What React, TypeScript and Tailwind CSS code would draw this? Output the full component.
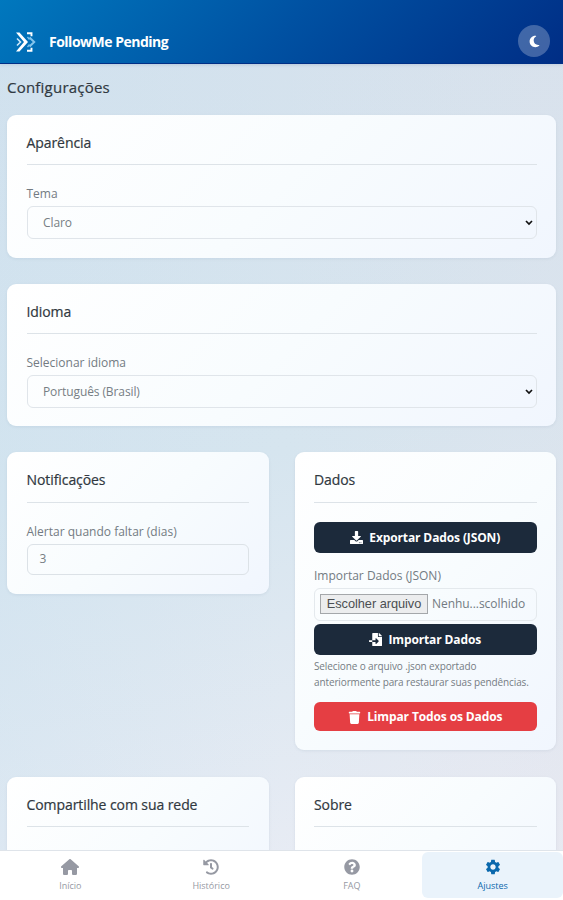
import type { ReactNode } from 'react';
import { FaDownload, FaFileImport, FaHistory, FaQuestionCircle, FaTrash } from 'react-icons/fa';
import { FaHouse, FaMoon } from 'react-icons/fa6';
import { MdSettings } from 'react-icons/md';
import { clsx } from 'clsx';

const tabs = [
  { label: 'Início', icon: FaHouse, size: 'h-4 w-[18px]' },
  { label: 'Histórico', icon: FaHistory, size: 'h-4 w-4' },
  { label: 'FAQ', icon: FaQuestionCircle, size: 'h-4 w-4' },
  { label: 'Ajustes', icon: MdSettings, size: '-m-px h-[18px] w-[18px]', active: true },
];

function Logo() {
  return (
    <svg viewBox="0 0 20 20" className="h-5 w-5" fill="none">
      <path d="M0 0.5h3.5L12 10l-8.500 9.500H0L8 10z" fill="#fff" />
      <path d="M1 6.500L4.500 10L1 13.500" stroke="#c9e6fa" strokeWidth="1.600" />
      <path d="M13.500 5.500l4.700 4.500-4.700 4.500" stroke="#83c4ec" strokeWidth="2" />
      <path d="M11 1.300h4.500v3M11 18.700h4.500v-3" stroke="#fff" strokeWidth="1.900" />
      <path d="M11.500 5l2 2.500M11.500 15l2-2.500" stroke="#7cc0ea" strokeWidth="1.300" />
    </svg>
  );
}

function Card({ title, className, children }: { title: string; className?: string; children?: ReactNode }) {
  return (
    <section
      className={clsx(
        'rounded-[9px] bg-linear-[135deg] from-white via-[#f8fcfe] to-[#f1f6fe] px-[19.5px] pt-[18px] shadow-[0_1px_3px_rgba(80,110,140,0.1)]',
        className
      )}
    >
      <h2 className="h-[32.5px] border-b border-[#dde3e8] text-[14px] leading-[19px] font-medium tracking-[-0.08px] text-[#303840] [-webkit-text-stroke:0.2px]">
        {title}
      </h2>
      {children}
    </section>
  );
}

function Label({ children }: { children: ReactNode }) {
  return <p className="text-[12px] leading-4 whitespace-nowrap text-[#737b82]">{children}</p>;
}

function Select({ value }: { value: string }) {
  return (
    <div className="mt-1 flex h-[33px] items-center justify-between rounded-[6px] border border-[#e0e5ea] pr-[3px] pl-[15.5px] text-[12px] tracking-[-0.1px] text-[#777e84]">
      <span>{value}</span>
      <svg viewBox="0 0 8 6" className="h-[6px] w-2" fill="none" stroke="#111" strokeWidth="1.7">
        <path d="M1 1l3 3 3-3" />
      </svg>
    </div>
  );
}

function Button({ icon, danger, className, children }: { icon: ReactNode; danger?: boolean; className?: string; children: ReactNode }) {
  return (
    <button
      className={clsx(
        'flex w-full items-center justify-center gap-[6px] rounded-[6px] text-[12px] font-bold tracking-[-0.12px] whitespace-nowrap text-white',
        danger ? 'bg-[#e53e43]' : 'bg-[#1c2a3b]',
        className
      )}
    >
      {icon}
      <span>{children}</span>
    </button>
  );
}

export default function App() {
  return (
    <div className="flex h-[900px] w-full flex-col overflow-hidden bg-linear-[170deg] from-[#d4e1ed] via-[#d6e5ef] via-50% to-[#ebedf5] font-['Open_Sans','Noto_Sans',sans-serif]">
      <header className="flex h-16 shrink-0 items-end justify-between bg-linear-[135deg] from-[#0078be] via-[#0051a2] to-[#002d85] pr-[13px] pl-4 shadow-[inset_0_-1px_0_#002f86,0_1px_3px_rgba(60,90,130,0.2)]">
        <div className="flex h-[45px] items-center gap-[13px]">
          <Logo />
          <h1 className="text-[14px] font-bold tracking-[-0.5px] text-white">FollowMe Pending</h1>
        </div>
        <button className="mb-[7px] flex h-8 w-8 items-center justify-center rounded-full bg-white/25 text-white">
          <FaMoon className="h-[13px] w-[13px]" />
        </button>
      </header>

      <main className="min-h-0 flex-1 overflow-hidden bg-linear-to-r from-[#c9e1f0]/30 via-transparent to-[#e3e1ea]/30 px-[7px]">
        <h1 className="flex h-[50.5px] items-center pb-[5px] text-[15px] font-medium tracking-[0.22px] text-[#303941] [-webkit-text-stroke:0.2px]">
          Configurações
        </h1>

        <Card title="Aparência" className="mb-[26px] h-[143px]">
          <div className="pt-[21px]">
            <Label>Tema</Label>
            <Select value="Claro" />
          </div>
        </Card>

        <Card title="Idioma" className="mb-[26px] h-[142.5px]">
          <div className="pt-[21px]">
            <Label>Selecionar idioma</Label>
            <Select value="Português (Brasil)" />
          </div>
        </Card>

        <div className="grid grid-cols-2 items-start gap-[26px]">
          <Card title="Notificações" className="h-[142px]">
            <div className="pt-[21px]">
              <Label>Alertar quando faltar (dias)</Label>
              <div className="mt-1 flex h-[31px] items-center rounded-[6px] border border-[#dce2e7] pl-3 text-[12px] text-[#777e84]">
                3
              </div>
            </div>
          </Card>

          <Card title="Dados" className="h-[298px]">
            <Button icon={<FaDownload className="h-[13px] w-[13px]" />} className="mt-[19px] mb-[15px] h-[31px] pt-px">
              Exportar Dados (JSON)
            </Button>
            <Label>Importar Dados (JSON)</Label>
            <div className="mt-[4px] flex h-[33px] items-center gap-1 rounded-[6px] border border-[#e4e9ed] pl-[5px] text-[12px] tracking-[-0.05px] whitespace-nowrap text-[#737b82]">
              <span className="flex h-5 w-[108px] shrink-0 items-center justify-center border border-[#a4a7aa] bg-[#ecedee] font-['Liberation_Sans',sans-serif] text-[12.8px] text-[#4b4f52]">
                Escolher arquivo
              </span>
              <span>Nenhu...scolhido</span>
            </div>
            <Button icon={<FaFileImport className="h-[13px] w-[13px]" />} className="mt-[3px] h-[31px] pt-px">
              Importar Dados
            </Button>
            <p className="mt-[3px] text-[10px] leading-4 tracking-[-0.12px] whitespace-nowrap text-[#757c83]">
              Selecione o arquivo .json exportado
              <br />
              anteriormente para restaurar suas pendências.
            </p>
            <Button danger icon={<FaTrash className="h-[13px] w-[13px]" />} className="mt-[12.5px] h-[29px] pt-px">
              Limpar Todos os Dados
            </Button>
          </Card>
        </div>

        <div className="mt-[26.5px] grid grid-cols-2 gap-[26px]">
          <Card title="Compartilhe com sua rede" className="h-[142px]" />
          <Card title="Sobre" className="h-[142px]" />
        </div>
      </main>

      <nav className="grid h-[50px] shrink-0 grid-cols-4 border-t border-[#dfe4ea] bg-white pt-px pb-[2px]">
        {tabs.map(({ label, icon: Icon, size, active }) => (
          <a
            key={label}
            className={clsx(
              'flex flex-col items-center gap-[4px] rounded-[6px] pt-[7px] text-[9px] leading-[14px]',
              active ? 'bg-[#eaf3fb] text-[#0a68ad]' : 'text-[#9699a3]'
            )}
          >
            <Icon className={size} />
            <span>{label}</span>
          </a>
        ))}
      </nav>
    </div>
  );
}
